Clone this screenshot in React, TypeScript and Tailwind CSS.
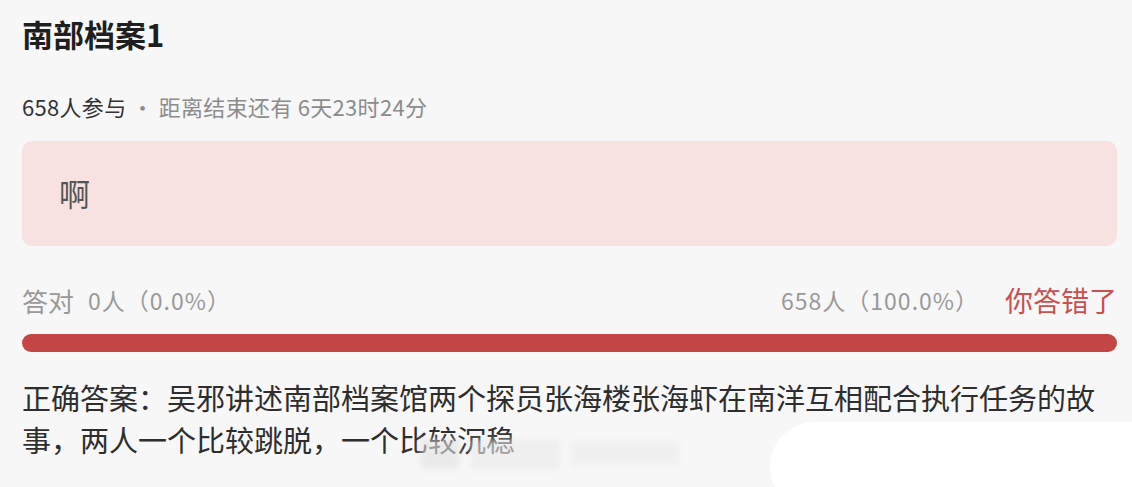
import React from "react";

const font = { fontFamily: '"Noto Sans CJK SC", "Noto Sans", sans-serif' };

export default function App() {
  return (
    <div
      className="relative w-[1132px] h-[487px] overflow-hidden bg-[#f7f7f7] pl-[22px] pr-[15px]"
      style={font}
    >
      <h1 className="pt-[12px] text-[31px] leading-[44px] font-bold text-[#1f1f1f]">
        南部档案1
      </h1>

      <div className="mt-[36px] text-[22px] leading-[28px] tracking-[0.3px] text-[#8c8c8c]">
        <span className="text-[#333]">658人参与</span>
        <span className="mx-[5px]">·</span>
        距离结束还有 6天23时24分
      </div>

      <div className="mt-[21px] h-[105px] rounded-[10px] bg-[#f7e1e1] flex items-center pl-[37px]">
        <span className="text-[31px] text-[#555]">啊</span>
      </div>

      <div className="mt-[39px] flex items-center justify-between h-[30px] text-[#999]">
        <div className="flex items-center">
          <span className="text-[26px]">答对</span>
          <span className="ml-[14px] text-[23px] tracking-[1px]">0人（0.0%）</span>
        </div>
        <div className="flex items-center">
          <span className="text-[23px] tracking-[1px] mr-[4px]">658人（100.0%）</span>
          <span className="ml-[22px] text-[28px] text-[#c9504f]">你答错了</span>
        </div>
      </div>

      <div className="mt-[19px] h-[18px] rounded-full bg-[#c44545]" />

      <p className="mt-[24px] text-[29px] leading-[42px] text-[#2e2e2e]">
        <span className="block whitespace-nowrap">
          正确答案：吴邪讲述南部档案馆两个探员张海楼张海虾在南洋互相配合执行任务的故
        </span>
        <span className="block whitespace-nowrap">事，两人一个比较跳脱，一个比较沉稳</span>
      </p>

      <div className="absolute left-[420px] top-[436px] w-[280px] h-[36px] flex gap-[10px] items-center blur-[3px] opacity-60">
        <div className="w-[40px] h-[30px] bg-[#e2e2e2]" />
        <div className="w-[90px] h-[30px] bg-[#eaeaea]" />
        <div className="w-[110px] h-[24px] bg-[#ececec]" />
      </div>

      <div className="absolute left-[770px] top-[422px] w-[420px] h-[90px] rounded-l-[45px] bg-white" />
    </div>
  );
}
